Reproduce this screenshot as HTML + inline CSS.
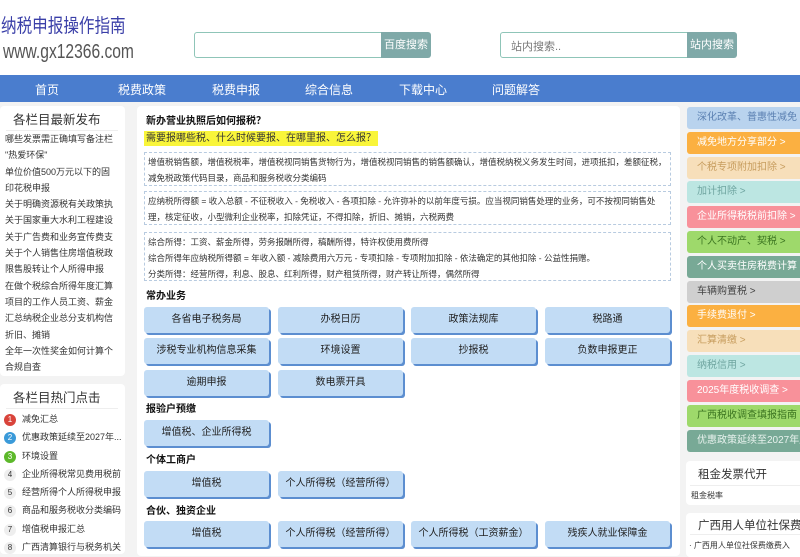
<!DOCTYPE html>
<html><head><meta charset="utf-8"><style>
*{margin:0;padding:0;box-sizing:border-box}
body{width:800px;height:550px;overflow:hidden;background:#f3f3f3;font-family:"Liberation Sans","Noto Sans CJK SC",sans-serif;position:relative;color:#333}
.a{position:absolute}
.hdr{left:0;top:0;width:800px;height:75px;background:#fff}
.logo1{left:1px;top:14px;font-size:19px;color:#3a3fa8;line-height:26px;transform:scaleX(.82);transform-origin:left;white-space:nowrap}
.logo2{left:3px;top:40px;font-size:20px;color:#555;transform:scaleX(.78);transform-origin:left;line-height:24px}
.sb{height:26px;border:1px solid #8fc5b8;border-radius:3px;background:#fff;font-size:11px;color:#777;padding:5px 10px}
.sbtn{height:26px;background:#7fa9a8;color:#fff;font-size:11px;border-radius:0 3px 3px 0;text-align:center;line-height:26px}
.nav{left:0;top:75px;width:800px;height:27px;background:#4a7dce}
.nav span{position:absolute;top:6px;color:#fff;font-size:12px}
.box{background:#fff;border-radius:4px}
.lt{font-size:12.5px;color:#333}
.ll{font-size:9px;color:#333;line-height:16.3px}
.hot{font-size:9px;line-height:18.3px}
.num{display:inline-block;width:12px;height:12px;border-radius:6px;text-align:center;line-height:12px;font-size:8px;margin-right:6px;color:#333;background:#eee}
.dash{border:1px dashed #b8cbe0;font-size:8.5px;line-height:16px;padding:0 3px;position:absolute;left:144px;width:527px;color:#333}
.h{font-size:10px;font-weight:bold;color:#111}
.btn{position:absolute;width:125px;height:26px;background:#c2dcf5;border-radius:3px;box-shadow:2px 2px 0 #5c8ed0;text-align:center;line-height:25px;font-size:10px;color:#222}
.r{position:absolute;left:687px;width:120px;height:22px;border-radius:3px;font-size:10px;line-height:22px;padding-left:10px;white-space:nowrap}
</style></head><body>
<div class="a hdr"></div>
<div class="a logo1">纳税申报操作指南</div>
<div class="a logo2">www.gx12366.com</div>
<div class="a sb" style="left:194px;top:32px;width:190px"></div>
<div class="a sbtn" style="left:381px;top:32px;width:50px">百度搜索</div>
<div class="a sb" style="left:500px;top:32px;width:190px">站内搜索..</div>
<div class="a sbtn" style="left:687px;top:32px;width:50px">站内搜索</div>
<div class="a nav"><span style="left:35px">首页</span><span style="left:118px">税费政策</span><span style="left:212px">税费申报</span><span style="left:305px">综合信息</span><span style="left:399px">下载中心</span><span style="left:492px">问题解答</span></div>

<div class="a box" style="left:0;top:106px;width:125px;height:270px"></div>
<div class="a lt" style="left:13px;top:109px">各栏目最新发布</div>
<div class="a" style="left:6px;top:130px;width:112px;border-top:1px solid #eee"></div>
<div class="a ll" style="left:5px;top:131px;width:118px;white-space:nowrap;overflow:hidden">哪些发票需正确填写备注栏<br>"热爱环保"<br>单位价值500万元以下的固<br>印花税申报<br>关于明确资源税有关政策执<br>关于国家重大水利工程建设<br>关于广告费和业务宣传费支<br>关于个人销售住房增值税政<br>限售股转让个人所得申报<br>在做个税综合所得年度汇算<br>项目的工作人员工资、薪金<br>汇总纳税企业总分支机构信<br>折旧、摊销<br>全年一次性奖金如何计算个<br>合规自查</div>
<div class="a box" style="left:0;top:384px;width:125px;height:170px"></div>
<div class="a lt" style="left:13px;top:387px">各栏目热门点击</div>
<div class="a" style="left:6px;top:408px;width:112px;border-top:1px solid #eee"></div>
<div class="a hot" style="left:4px;top:410px;width:121px;white-space:nowrap;overflow:hidden">
<div><span class="num" style="background:#d9443b;color:#fff">1</span>减免汇总</div>
<div><span class="num" style="background:#3a9ad9;color:#fff">2</span>优惠政策延续至2027年...</div>
<div><span class="num" style="background:#5cb82a;color:#fff">3</span>环境设置</div>
<div><span class="num">4</span>企业所得税常见费用税前</div>
<div><span class="num">5</span>经营所得个人所得税申报</div>
<div><span class="num">6</span>商品和服务税收分类编码</div>
<div><span class="num">7</span>增值税申报汇总</div>
<div><span class="num">8</span>广西清算银行与税务机关</div>
</div>

<div class="a box" style="left:137px;top:106px;width:543px;height:450px"></div>
<div class="a h" style="left:146px;top:112px">新办营业执照后如何报税？</div>
<div class="a" style="left:144px;top:131px;background:#f9f53a;font-size:10px;padding:0 2px;line-height:15px">需要报哪些税、什么时候要报、在哪里报、怎么报？</div>
<div class="dash" style="top:152px;height:34px;padding-top:1px">增值税销售额，增值税税率，增值税视同销售货物行为，增值税视同销售的销售额确认，增值税纳税义务发生时间，进项抵扣，差额征税，减免税政策代码目录，商品和服务税收分类编码</div>
<div class="dash" style="top:191px;height:34px;padding-top:1px">应纳税所得额 = 收入总额 - 不征税收入 - 免税收入 - 各项扣除 - 允许弥补的以前年度亏损。应当视同销售处理的业务，可不按视同销售处理，核定征收，小型微利企业税率，扣除凭证，不得扣除，折旧、摊销，六税两费</div>
<div class="dash" style="top:232px;height:49px;padding-top:1px">综合所得：工资、薪金所得，劳务报酬所得，稿酬所得，特许权使用费所得<br>综合所得年应纳税所得额 = 年收入额 - 减除费用六万元 - 专项扣除 - 专项附加扣除 - 依法确定的其他扣除 - 公益性捐赠。<br>分类所得：经营所得，利息、股息、红利所得，财产租赁所得，财产转让所得，偶然所得</div>
<div class="a h" style="left:146px;top:287px">常办业务</div>
<div class="btn" style="left:144px;top:307px">各省电子税务局</div>
<div class="btn" style="left:278px;top:307px">办税日历</div>
<div class="btn" style="left:411px;top:307px">政策法规库</div>
<div class="btn" style="left:545px;top:307px">税路通</div>
<div class="btn" style="left:144px;top:338px">涉税专业机构信息采集</div>
<div class="btn" style="left:278px;top:338px">环境设置</div>
<div class="btn" style="left:411px;top:338px">抄报税</div>
<div class="btn" style="left:545px;top:338px">负数申报更正</div>
<div class="btn" style="left:144px;top:370px">逾期申报</div>
<div class="btn" style="left:278px;top:370px">数电票开具</div>
<div class="a h" style="left:146px;top:400px">报验户预缴</div>
<div class="btn" style="left:144px;top:420px">增值税、企业所得税</div>
<div class="a h" style="left:146px;top:451px">个体工商户</div>
<div class="btn" style="left:144px;top:471px">增值税</div>
<div class="btn" style="left:278px;top:471px">个人所得税（经营所得）</div>
<div class="a h" style="left:146px;top:502px">合伙、独资企业</div>
<div class="btn" style="left:144px;top:521px">增值税</div>
<div class="btn" style="left:278px;top:521px">个人所得税（经营所得）</div>
<div class="btn" style="left:411px;top:521px">个人所得税（工资薪金）</div>
<div class="btn" style="left:545px;top:521px">残疾人就业保障金</div>

<div class="r" style="top:107px;background:#b9d3ee;color:#5b80b2">深化改革、普惠性减免</div>
<div class="r" style="top:132px;background:#fbb041;color:#fff">减免地方分享部分 &gt;</div>
<div class="r" style="top:157px;background:#f7dfba;color:#c79d5e">个税专项附加扣除 &gt;</div>
<div class="r" style="top:181px;background:#bce6e2;color:#6fa5a0">加计扣除 &gt;</div>
<div class="r" style="top:206px;background:#f8919a;color:#fff">企业所得税税前扣除 &gt;</div>
<div class="r" style="top:231px;background:#9ed96b;color:#3b7420">个人不动产、契税 &gt;</div>
<div class="r" style="top:256px;background:#78a996;color:#fff">个人买卖住房税费计算</div>
<div class="r" style="top:281px;background:#cfcfcf;color:#444">车辆购置税 &gt;</div>
<div class="r" style="top:305px;background:#fbb041;color:#fff">手续费退付 &gt;</div>
<div class="r" style="top:330px;background:#f7dfba;color:#c79d5e">汇算清缴 &gt;</div>
<div class="r" style="top:355px;background:#bce6e2;color:#6fa5a0">纳税信用 &gt;</div>
<div class="r" style="top:380px;background:#f8919a;color:#fff">2025年度税收调查 &gt;</div>
<div class="r" style="top:405px;background:#9ed96b;color:#3b7420">广西税收调查填报指南</div>
<div class="r" style="top:430px;background:#78a996;color:#e8f2ee">优惠政策延续至2027年底</div>
<div class="a box" style="left:686px;top:461px;width:120px;height:44px"></div>
<div class="a" style="left:698px;top:466px;font-size:11.5px">租金发票代开</div>
<div class="a" style="left:690px;top:485px;width:110px;border-top:1px solid #eee"></div>
<div class="a" style="left:691px;top:490px;font-size:8px">租金税率</div>
<div class="a box" style="left:686px;top:513px;width:120px;height:44px"></div>
<div class="a" style="left:698px;top:517px;font-size:11.5px;white-space:nowrap">广西用人单位社保费</div>
<div class="a" style="left:690px;top:534px;width:110px;border-top:1px solid #eee"></div>
<div class="a" style="left:689px;top:540px;font-size:8px;white-space:nowrap">· 广西用人单位社保费缴费入</div>
</body></html>
